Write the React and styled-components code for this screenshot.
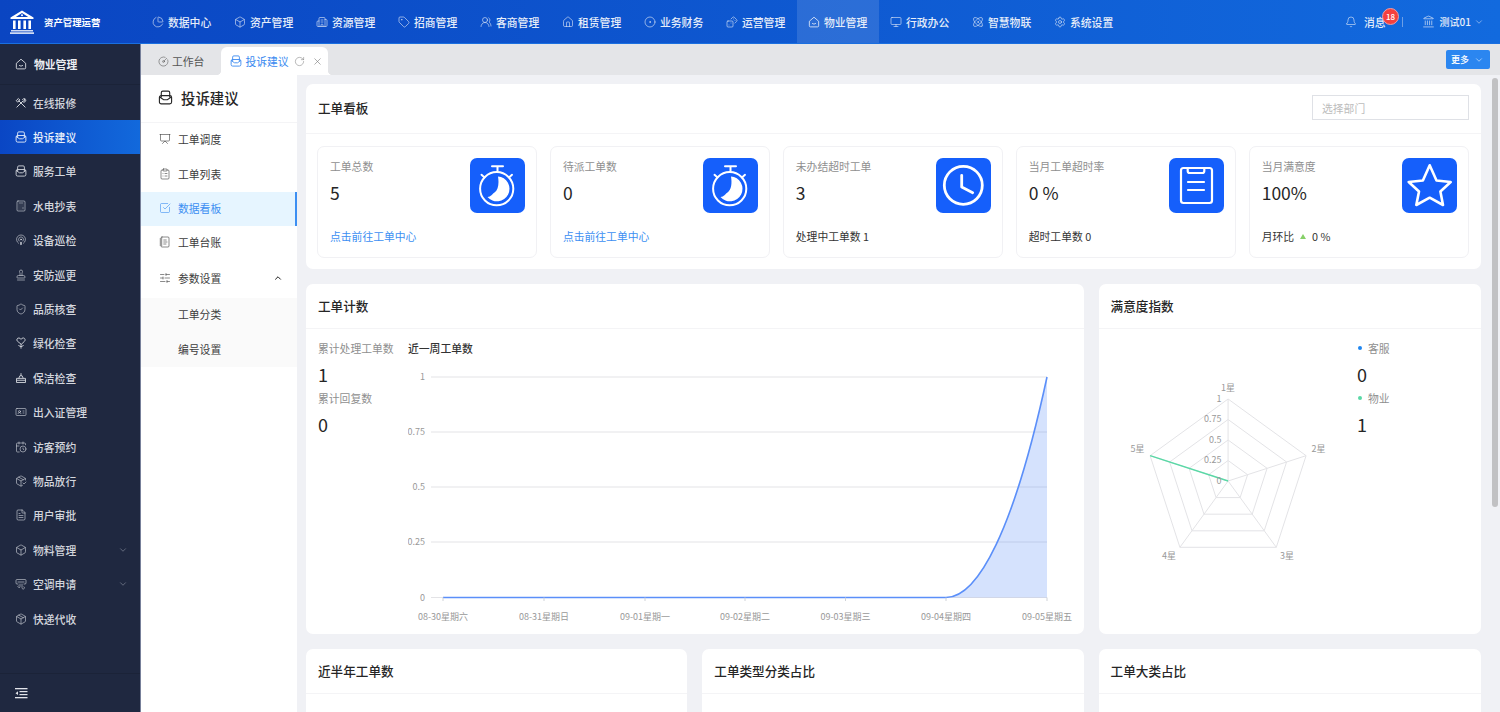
import React from "react";
import styled, { createGlobalStyle } from "styled-components";
import {
  AirVent, Atom, Bell, Box, Building2, Calculator, CalendarClock, ChartPie, ChevronDown, ChevronUp,
  CircleDot, CircleGauge, ClipboardList, FileText, IdCard, Landmark, Monitor, NotebookText,
  Package, PackageCheck, Podcast, Presentation, Dices, RotateCw, Settings, ShieldCheck, SlidersHorizontal,
  SquareCheckBig, Stamp, Tag, UsersRound, House, X,
} from "lucide-react";

const GlobalStyle = createGlobalStyle`
  html, body {
    margin: 0;
    height: 100%;
    overflow: hidden;
    font-family: "Noto Sans CJK SC", "Noto Sans", sans-serif;
  }
  #root { height: 100%; }
  * { box-sizing: border-box; }
`;

const Page = styled.div`
  height: 100vh;
  display: flex;
  flex-direction: column;
`;

const TopBar = styled.header`
  height: 44px;
  flex: none;
  display: flex;
  align-items: stretch;
  background: linear-gradient(90deg, #0a45c2, #126ade);
  border-bottom: 1px solid #1a6fe0;
  color: #e6edf9;
`;

const Brand = styled.div`
  width: 141px;
  flex: none;
  display: flex;
  align-items: center;
  gap: 10px;
  padding-left: 10px;
  font-size: 9.4px;
  font-weight: 700;
  color: #fff;
`;

const TopNav = styled.nav`
  display: flex;
`;

const TopItem = styled.div`
  width: 82px;
  display: flex;
  align-items: center;
  gap: 4px;
  padding-left: 11px;
  font-size: 10.8px;
  font-weight: 500;
  white-space: nowrap;
  background: ${(p) => (p.$active ? "rgba(255,255,255,.12)" : "transparent")};
`;

const TopRight = styled.div`
  margin-left: auto;
  display: flex;
  align-items: center;
  padding-right: 16px;
  font-size: 10.8px;
  font-weight: 500;
`;

const Message = styled.div`
  position: relative;
  display: flex;
  align-items: center;
  gap: 7px;
  margin-right: 16px;
`;

const Badge = styled.span`
  position: absolute;
  left: 37px;
  top: -6px;
  width: 17px;
  height: 17px;
  border-radius: 50%;
  background: #f5403f;
  border: 1px solid #e8a0a8;
  color: #fff;
  font-size: 8px;
  line-height: 15px;
  text-align: center;
`;

const TopDivider = styled.span`
  width: 1px;
  height: 10px;
  background: #6d9fe6;
  margin-right: 19px;
`;

const UserBox = styled.div`
  display: flex;
  align-items: center;
  gap: 5px;
  font-size: 10px;

  svg:last-child {
    margin-left: -2px;
  }
`;

const Body = styled.div`
  flex: 1;
  min-height: 0;
  display: flex;
`;

const Sidebar = styled.aside`
  width: 141px;
  flex: none;
  display: flex;
  flex-direction: column;
  background: #1f2840;
  border-right: 1px solid #77809a;
  color: #d8dbe2;
`;

const SideHead = styled.div`
  height: 41px;
  flex: none;
  display: flex;
  align-items: center;
  gap: 7px;
  padding-left: 15px;
  margin-bottom: 0.5px;
  border-bottom: 1px solid #1b2338;
  font-size: 10.8px;
  font-weight: 700;
  color: #eceef2;
`;

const SideList = styled.div`
  flex: 1;
`;

const SideItem = styled.div`
  height: 34.4px;
  display: flex;
  align-items: center;
  gap: 6px;
  padding: 0 12px 0 15px;
  font-size: 10.8px;
  font-weight: 500;
  color: ${(p) => (p.$active ? "#e8effa" : "#d3d6dd")};
  background: ${(p) => (p.$active ? "linear-gradient(90deg, #0a46c4, #1269dc)" : "transparent")};

  svg:last-child:not(:first-child) {
    margin-left: auto;
    color: #8a90a0;
  }
`;

const SideFoot = styled.div`
  height: 39px;
  flex: none;
  display: flex;
  align-items: center;
  padding-left: 15px;
  border-top: 1px solid #1b2338;
  color: #e2e4ea;
`;

const Main = styled.main`
  flex: 1;
  min-width: 0;
  display: flex;
  flex-direction: column;
`;

const TabBar = styled.div`
  height: 31px;
  flex: none;
  display: flex;
  align-items: flex-end;
  background: #e4e5e8;
  padding-left: 3px;
  position: relative;
`;

const Tab = styled.div`
  position: relative;
  height: 28px;
  display: flex;
  align-items: center;
  gap: 3px;
  padding: ${(p) => (p.$active ? "0 5px 0 9px" : "0 17px 0 14px")};
  font-size: 10.8px;
  border-radius: 6px 6px 0 0;
  color: ${(p) => (p.$active ? "#3b8af0" : "#555")};
  background: ${(p) => (p.$active ? "#fff" : "transparent")};

  ${(p) =>
    p.$active &&
    `
    &::before, &::after {
      content: "";
      position: absolute;
      bottom: 0;
      width: 5px;
      height: 5px;
    }
    &::before {
      left: -5px;
      background: radial-gradient(circle at 0 0, transparent 5px, #fff 5.5px);
    }
    &::after {
      right: -5px;
      background: radial-gradient(circle at 100% 0, transparent 5px, #fff 5.5px);
    }
  `}
`;

const TabTools = styled.span`
  display: flex;
  align-items: center;
  gap: 7px;
  margin-left: 2px;
  color: #777;
`;

const MoreButton = styled.button`
  position: absolute;
  right: 10px;
  top: 6px;
  width: 44px;
  height: 19px;
  border: 0;
  border-radius: 2px;
  padding: 0 0 0 5px;
  display: flex;
  align-items: center;
  gap: 5px;
  background: #2b86f0;
  color: #fff;
  font: 500 9px "Noto Sans CJK SC", sans-serif;
`;

const Split = styled.div`
  flex: 1;
  min-height: 0;
  display: flex;
`;

const SubNav = styled.div`
  width: 156px;
  flex: none;
  background: #fff;
`;

const SubTitle = styled.div`
  height: 48px;
  display: flex;
  align-items: center;
  gap: 8px;
  padding: 0 0 2px 17px;
  font-size: 14.4px;
  font-weight: 500;
  color: #262626;
  border-bottom: 1px solid #f4f4f6;
`;

const SubItem = styled.div`
  height: ${(p) => p.$height || 34.4}px;
  display: flex;
  align-items: center;
  gap: 7px;
  padding: 0 12px 2px 18px;
  font-size: 10.8px;
  color: ${(p) => (p.$active ? "#3d8ff2" : "#3c3c3c")};
  background: ${(p) => (p.$active ? "#e6f5ff" : "transparent")};
  border-right: 2px solid ${(p) => (p.$active ? "#3d8ff2" : "transparent")};
`;

const SubGroup = styled.div`
  background: #fafafa;
  padding-left: 19px;
`;

const Arrow = styled.span`
  margin-left: auto;
  display: flex;
  color: #222;
`;

const ContentWrap = styled.div`
  position: relative;
  flex: 1;
  min-width: 0;
  overflow: hidden;
  background: #f0f1f5;
`;

const ScrollThumb = styled.div`
  position: absolute;
  top: 3px;
  right: 2px;
  width: 6px;
  height: 429px;
  border-radius: 3px;
  background: #c1c1c3;
`;

const Content = styled.div`
  padding: 9px 19px 9px 9px;
`;

const Panel = styled.section`
  background: #fff;
  border-radius: 7px;
  height: ${(p) => (p.$height ? `${p.$height}px` : "auto")};
  grid-column: ${(p) => (p.$wide ? "span 2" : "auto")};
  display: flex;
  flex-direction: column;
`;

const PanelHead = styled.div`
  height: ${(p) => p.$height || 45}px;
  flex: none;
  display: flex;
  align-items: center;
  justify-content: space-between;
  padding: 0 12px 2px;
  font-size: 12.6px;
  font-weight: 500;
  color: #262626;
  border-bottom: 1px solid #f4f4f6;
`;

const FakeSelect = styled.div`
  width: 157px;
  height: 25px;
  border: 1px solid #dfe1e6;
  padding-left: 9px;
  display: flex;
  align-items: center;
  font-size: 10.8px;
  font-weight: 400;
  color: #bcbcbc;
`;

const CardRow = styled.div`
  display: grid;
  grid-template-columns: repeat(5, 1fr);
  gap: 12.6px;
  padding: 12px 12px 11px 11px;
`;

const Card = styled.div`
  height: 112px;
  border: 1px solid #f1f1f4;
  border-radius: 7px;
  padding: 10px 11px 0 12px;
  display: flex;
  justify-content: space-between;
`;

const CardText = styled.div`
  display: flex;
  flex-direction: column;
`;

const CardLabel = styled.div`
  font-size: 10.8px;
  line-height: 18px;
  color: #8f8f8f;
`;

const CardValue = styled.div`
  font-size: 17.5px;
  line-height: 24px;
  margin-top: 6px;
  color: #262626;
`;

const CardFoot = styled.div`
  font-size: 10.8px;
  line-height: 18px;
  margin-top: 22px;
  display: flex;
  align-items: center;
  gap: 4px;
  color: ${(p) => (p.$link ? "#3d8ff2" : "#333")};
`;

const UpMark = styled.span`
  width: 0;
  height: 0;
  margin: 0 2px;
  border: 3.5px solid transparent;
  border-top: 0;
  border-bottom: 5px solid #86d068;
`;

const Tile = styled.div`
  width: 55px;
  height: 55px;
  flex: none;
  margin-top: 1px;
  border-radius: 7px;
  background: #155ffb;
`;

const Row = styled.div`
  display: grid;
  grid-template-columns: 381.3px 381.3px 1fr;
  gap: 15px;
  margin-top: 15px;
`;

const PanelBody = styled.div`
  flex: 1;
  display: flex;
  padding: 9px 0 0 12px;
  min-height: 0;
`;

const StatColumn = styled.div`
  width: 90px;
  flex: none;
`;

const StatLabel = styled.div`
  display: flex;
  align-items: center;
  gap: 6px;
  font-size: 10.8px;
  line-height: 20px;
  color: #8f8f8f;
  white-space: nowrap;
`;

const StatValue = styled.div`
  font-size: 18px;
  line-height: 30px;
  padding-top: 1px;
  margin-bottom: -1px;
  color: #262626;
`;

const Dot = styled.span`
  width: 4px;
  height: 4px;
  margin-left: 1px;
  border-radius: 50%;
  background: ${(p) => p.$color};
`;

const ChartColumn = styled.div`
  flex: 1;
  min-width: 0;
`;

const ChartTitle = styled.div`
  font-size: 10.8px;
  line-height: 20px;
  font-weight: 500;
  color: #333;
`;

const Legend = styled.div`
  padding-top: 9px;
`;

const RadarBody = styled.div`
  flex: 1;
  display: flex;
`;

const AxisText = styled.text`
  font-size: 9px;
  fill: #999;
  font-family: "Noto Sans CJK SC", "Noto Sans", sans-serif;
`;

function BoxMail({ size = 12 }) {
  return (
    <svg width={size} height={size} viewBox="0 0 16 16" fill="none" stroke="currentColor" strokeWidth="1.2">
      <rect x="1.5" y="6" width="13" height="8.8" rx="2" />
      <path d="M3.5 8V2.8a1.6 1.6 0 0 1 1.6-1.6h5.8a1.6 1.6 0 0 1 1.6 1.6V8" />
      <path d="M1.8 7.5 6 10.4h4l4.2-2.9" />
    </svg>
  );
}

function HomeSmile({ size = 12 }) {
  return (
    <svg width={size} height={size} viewBox="0 0 16 16" fill="none" stroke="currentColor" strokeWidth="1.1">
      <path d="M1.8 7 8 1.6 14.2 7v6a1.5 1.5 0 0 1-1.5 1.5H3.3A1.5 1.5 0 0 1 1.8 13Z" />
      <path d="M5.4 9.6c1.4 1.5 3.8 1.5 5.2 0" />
    </svg>
  );
}

function CrossTools() {
  return (
    <svg width="12" height="12" viewBox="0 0 16 16" fill="none" stroke="currentColor" strokeWidth="1.3" strokeLinecap="round">
      <path d="M5 5 13.5 13.5M11 5 2.5 13.5" />
      <path d="M2 4.5 4.5 2 6.5 4 4 6.5ZM10 3.500a2.500 2.500 0 0 1 3.500-1L12 4l.8.8L14.200 3.500a2.500 2.500 0 0 1-3.200 3.200" />
    </svg>
  );
}

function HeartStem() {
  return (
    <svg width="12" height="12" viewBox="0 0 16 16" fill="none" stroke="currentColor" strokeWidth="1.2" strokeLinecap="round" strokeLinejoin="round">
      <path d="M8 9.5 3.2 5.6C1.4 3.8 3 1 5.3 1.3 6.6 1.4 7.5 2.2 8 3.2c.5-1 1.4-1.8 2.7-1.9C13 1 14.6 3.8 12.8 5.6Z" />
      <path d="M8 9.5V15M5 11.5l3 1.5 3-1.5" />
    </svg>
  );
}

function BroomBase() {
  return (
    <svg width="12" height="12" viewBox="0 0 16 16" fill="none" stroke="currentColor" strokeWidth="1.2" strokeLinejoin="round">
      <path d="M2 8.5h12V14H2ZM5 8.5 6.5 5h3L11 8.5M8 5V1.500M2 11h12" />
    </svg>
  );
}

function CollapseIcon() {
  return (
    <svg width="13" height="13" viewBox="0 0 13 13" fill="currentColor">
      <rect x="0" y="1" width="12.5" height="1.3" />
      <rect x="4.5" y="4" width="8" height="1.2" />
      <rect x="4.5" y="7" width="8" height="1.2" />
      <rect x="0" y="10" width="12.5" height="1.3" />
      <path d="M3 4.3v3.800L.5 6.200Z" />
    </svg>
  );
}

function BankLogo() {
  return (
    <svg width="24" height="24" viewBox="0 0 24 24" fill="#fff">
      <path d="M12 .5 23.5 7.5v1.6H.5V7.5Zm0 2.6L5.8 7h12.4Z" fillRule="evenodd" />
      <circle cx="12" cy="5.3" r="1" />
      <rect x="3" y="10.5" width="2.6" height="8.5" />
      <rect x="8" y="10.5" width="2.6" height="8.5" />
      <rect x="13.4" y="10.5" width="2.6" height="8.5" />
      <rect x="18.4" y="10.5" width="2.6" height="8.5" />
      <rect x="1" y="20.2" width="22" height="1.2" />
      <rect x="0" y="22.4" width="24" height="1.4" />
    </svg>
  );
}

function StopwatchTile() {
  return (
    <Tile>
      <svg width="55" height="55" viewBox="0 0 55 55" fill="none" stroke="#fff" strokeWidth="2" strokeLinecap="round">
        <circle cx="26.7" cy="30.7" r="16.6" />
        <path d="M22 8.3h11M27.5 8.3v4.6M11.500 16.8l3 2.6M42 16.8l-3 2.6" />
        <path
          d="M28 18.4A12.5 12.5 0 1 1 17.5 39c3.6-.4 4.8-3.100 7-4.600 4-2.800 4.600-9.400 3.500-16Z"
          fill="#fff"
          stroke="none"
        />
      </svg>
    </Tile>
  );
}

function ClockTile() {
  return (
    <Tile>
      <svg width="55" height="55" viewBox="0 0 55 55" fill="none" stroke="#fff" strokeWidth="2.8" strokeLinecap="round" strokeLinejoin="round">
        <circle cx="27.3" cy="27.3" r="19" />
        <path d="M25.7 17.3V29l11 5.7" />
      </svg>
    </Tile>
  );
}

function ClipboardTile() {
  return (
    <Tile>
      <svg width="55" height="55" viewBox="0 0 55 55" fill="none" stroke="#fff" strokeWidth="2.2" strokeLinecap="round" strokeLinejoin="round">
        <rect x="12" y="10" width="31" height="35" rx="2.5" />
        <path d="M18.7 10v3a2 2 0 0 0 2 2h12.600a2 2 0 0 0 2-2v-3M19 24h16M19 32h16" />
      </svg>
    </Tile>
  );
}

function StarTile() {
  return (
    <Tile>
      <svg width="55" height="55" viewBox="0 0 55 55" fill="none" stroke="#fff" strokeWidth="2.6" strokeLinejoin="round">
        <path d="M27.7 7.3 34.5 22.5 48.7 24 38.4 33.5 41 47 27.7 39.7 14.3 47 17 33.5 6.700 24 20.900 22.500Z" />
      </svg>
    </Tile>
  );
}

const topItems = [
  ["数据中心", <ChartPie size={12} strokeWidth={1.2} />],
  ["资产管理", <Box size={12} strokeWidth={1.2} />],
  ["资源管理", <Building2 size={12} strokeWidth={1.2} />],
  ["招商管理", <Tag size={12} strokeWidth={1.2} />],
  ["客商管理", <UsersRound size={12} strokeWidth={1.2} />],
  ["租赁管理", <House size={12} strokeWidth={1.2} />],
  ["业务财务", <CircleDot size={12} strokeWidth={1.2} />],
  ["运营管理", <Dices size={12} strokeWidth={1.2} />],
  ["物业管理", <HomeSmile />, true],
  ["行政办公", <Monitor size={12} strokeWidth={1.2} />],
  ["智慧物联", <Atom size={12} strokeWidth={1.2} />],
  ["系统设置", <Settings size={12} strokeWidth={1.2} />],
];

const sideItems = [
  ["在线报修", <CrossTools />],
  ["投诉建议", <BoxMail />, true],
  ["服务工单", <BoxMail />],
  ["水电抄表", <Calculator size={12} strokeWidth={1.2} />],
  ["设备巡检", <Podcast size={12} strokeWidth={1.2} />],
  ["安防巡更", <Stamp size={12} strokeWidth={1.2} />],
  ["品质核查", <ShieldCheck size={12} strokeWidth={1.2} />],
  ["绿化检查", <HeartStem />],
  ["保洁检查", <BroomBase />],
  ["出入证管理", <IdCard size={12} strokeWidth={1.2} />],
  ["访客预约", <CalendarClock size={12} strokeWidth={1.2} />],
  ["物品放行", <PackageCheck size={12} strokeWidth={1.2} />],
  ["用户审批", <FileText size={12} strokeWidth={1.2} />],
  ["物料管理", <Box size={12} strokeWidth={1.2} />, false, true],
  ["空调申请", <AirVent size={12} strokeWidth={1.2} />, false, true],
  ["快递代收", <Package size={12} strokeWidth={1.2} />],
];

const boardCards = [
  { label: "工单总数", value: "5", foot: "点击前往工单中心", link: true, tile: <StopwatchTile /> },
  { label: "待派工单数", value: "0", foot: "点击前往工单中心", link: true, tile: <StopwatchTile /> },
  { label: "未办结超时工单", value: "3", foot: "处理中工单数 1", tile: <ClockTile /> },
  { label: "当月工单超时率", value: "0 %", foot: "超时工单数 0", tile: <ClipboardTile /> },
  { label: "当月满意度", value: "100%", foot: "月环比", trend: "0 %", tile: <StarTile /> },
];

const days = ["08-30星期六", "08-31星期日", "09-01星期一", "09-02星期二", "09-03星期三", "09-04星期四", "09-05星期五"];
const dayX = [35, 136, 237, 337, 437.5, 538, 639];
const gridY = [[19, "1"], [74, "0.75"], [129, "0.5"], [184, "0.25"], [239.5, "0"]];

function WeekChart() {
  return (
    <svg width="670" height="275" viewBox="0 0 670 275">
      {gridY.map(([y, label]) => (
        <g key={label}>
          <line x1="23" x2="639" y1={y} y2={y} stroke="#e3e3e6" />
          <AxisText x="17" y={y + 3} textAnchor="end">{label}</AxisText>
        </g>
      ))}
      <path d="M35 239.5H538C570 239.5 606 172 639 19V239.5Z" fill="#5b8ff9" fillOpacity=".26" />
      <path d="M35 239.5H538C570 239.5 606 172 639 19" fill="none" stroke="#5b8ff9" strokeWidth="1.6" />
      {dayX.map((x, i) => (
        <g key={x}>
          <line x1={x} x2={x} y1="239.5" y2="243" stroke="#cfd2d8" />
          <AxisText x={x} y="262" textAnchor="middle">{days[i]}</AxisText>
        </g>
      ))}
    </svg>
  );
}

const radarCx = 129.1;
const radarCy = 152;
const radarR = 82;
const corner = (i, r) => {
  const a = (-90 + i * 72) * (Math.PI / 180);
  return [radarCx + r * Math.cos(a), radarCy + r * Math.sin(a)];
};
const ring = (r) => [0, 1, 2, 3, 4].map((i) => corner(i, r).map((v) => v.toFixed(1)).join(",")).join(" ");
const radarTicks = [[70, "1"], [90.5, "0.75"], [111, "0.5"], [131, "0.25"], [152, "0"]];
const radarLabels = [["1星", 129.1, 62], ["2星", 219.4, 123], ["3星", 187.9, 230], ["4星", 69.9, 230], ["5星", 38.4, 123]];

function RadarChart() {
  const tip = corner(4, radarR);
  return (
    <svg width="258.4" height="305" viewBox="0 0 258.4 305">
      {[20.5, 41, 61.5, 82].map((r) => (
        <polygon key={r} points={ring(r)} fill="none" stroke="#e3e3e6" />
      ))}
      {[0, 1, 2, 3, 4].map((i) => {
        const [x, y] = corner(i, radarR);
        return <line key={i} x1={radarCx} y1={radarCy} x2={x} y2={y} stroke="#e3e3e6" />;
      })}
      <line x1={radarCx} y1={radarCy} x2={tip[0]} y2={tip[1]} stroke="#5ad8a6" strokeWidth="1.5" />
      {radarTicks.map(([y, label]) => (
        <AxisText key={label} x="122.4" y={y + 3} textAnchor="end">{label}</AxisText>
      ))}
      {radarLabels.map(([label, x, y]) => (
        <AxisText key={label} x={x} y={y} textAnchor="middle">{label}</AxisText>
      ))}
    </svg>
  );
}

export default function App() {
  return (
    <Page>
      <GlobalStyle />
      <TopBar>
        <Brand>
          <BankLogo />
          资产管理运营
        </Brand>
        <TopNav>
          {topItems.map(([label, icon, active]) => (
            <TopItem key={label} $active={active}>
              {icon}
              {label}
            </TopItem>
          ))}
        </TopNav>
        <TopRight>
          <Message>
            <Bell size={12} strokeWidth={1.2} />
            消息
            <Badge>18</Badge>
          </Message>
          <TopDivider />
          <UserBox>
            <Landmark size={13} strokeWidth={1.2} />
            测试01
            <ChevronDown size={10} strokeWidth={1.2} />
          </UserBox>
        </TopRight>
      </TopBar>
      <Body>
        <Sidebar>
          <SideHead>
            <HomeSmile />
            物业管理
          </SideHead>
          <SideList>
            {sideItems.map(([label, icon, active, more]) => (
              <SideItem key={label} $active={active}>
                {icon}
                {label}
                {more && <ChevronDown size={10} strokeWidth={1.5} />}
              </SideItem>
            ))}
          </SideList>
          <SideFoot>
            <CollapseIcon />
          </SideFoot>
        </Sidebar>
        <Main>
          <TabBar>
            <Tab>
              <CircleGauge size={11} strokeWidth={1.2} />
              工作台
            </Tab>
            <Tab $active>
              <BoxMail />
              投诉建议
              <TabTools>
                <RotateCw size={11} strokeWidth={1.1} />
                <X size={11} strokeWidth={1.3} />
              </TabTools>
            </Tab>
            <MoreButton>
              更多
              <ChevronDown size={10} strokeWidth={1.3} />
            </MoreButton>
          </TabBar>
          <Split>
            <SubNav>
              <SubTitle>
                <BoxMail size={15} />
                投诉建议
              </SubTitle>
              <SubItem>
                <Presentation size={12} strokeWidth={1.2} />
                工单调度
              </SubItem>
              <SubItem>
                <ClipboardList size={12} strokeWidth={1.2} />
                工单列表
              </SubItem>
              <SubItem $active>
                <SquareCheckBig size={12} strokeWidth={1.2} />
                数据看板
              </SubItem>
              <SubItem>
                <NotebookText size={12} strokeWidth={1.2} />
                工单台账
              </SubItem>
              <SubItem $height={37.4}>
                <SlidersHorizontal size={12} strokeWidth={1.2} />
                参数设置
                <Arrow>
                  <ChevronUp size={10} strokeWidth={2.4} />
                </Arrow>
              </SubItem>
              <SubGroup>
                <SubItem>工单分类</SubItem>
                <SubItem>编号设置</SubItem>
              </SubGroup>
            </SubNav>
            <ContentWrap>
              <Content>
                <Panel>
                  <PanelHead $height={50}>
                    工单看板
                    <FakeSelect>选择部门</FakeSelect>
                  </PanelHead>
                  <CardRow>
                    {boardCards.map((c) => (
                      <Card key={c.label}>
                        <CardText>
                          <CardLabel>{c.label}</CardLabel>
                          <CardValue>{c.value}</CardValue>
                          <CardFoot $link={c.link}>
                            {c.foot}
                            {c.trend && <UpMark />}
                            {c.trend}
                          </CardFoot>
                        </CardText>
                        {c.tile}
                      </Card>
                    ))}
                  </CardRow>
                </Panel>
                <Row>
                  <Panel $wide $height={350}>
                    <PanelHead>工单计数</PanelHead>
                    <PanelBody>
                      <StatColumn>
                        <StatLabel>累计处理工单数</StatLabel>
                        <StatValue>1</StatValue>
                        <StatLabel>累计回复数</StatLabel>
                        <StatValue>0</StatValue>
                      </StatColumn>
                      <ChartColumn>
                        <ChartTitle>近一周工单数</ChartTitle>
                        <WeekChart />
                      </ChartColumn>
                    </PanelBody>
                  </Panel>
                  <Panel $height={350}>
                    <PanelHead>满意度指数</PanelHead>
                    <RadarBody>
                      <RadarChart />
                      <Legend>
                        <StatLabel>
                          <Dot $color="#1f86f0" />
                          客服
                        </StatLabel>
                        <StatValue>0</StatValue>
                        <StatLabel>
                          <Dot $color="#5ad8a6" />
                          物业
                        </StatLabel>
                        <StatValue>1</StatValue>
                      </Legend>
                    </RadarBody>
                  </Panel>
                </Row>
                <Row>
                  <Panel $height={362}>
                    <PanelHead>近半年工单数</PanelHead>
                  </Panel>
                  <Panel $height={362}>
                    <PanelHead>工单类型分类占比</PanelHead>
                  </Panel>
                  <Panel $height={362}>
                    <PanelHead>工单大类占比</PanelHead>
                  </Panel>
                </Row>
              </Content>
              <ScrollThumb />
            </ContentWrap>
          </Split>
        </Main>
      </Body>
    </Page>
  );
}
